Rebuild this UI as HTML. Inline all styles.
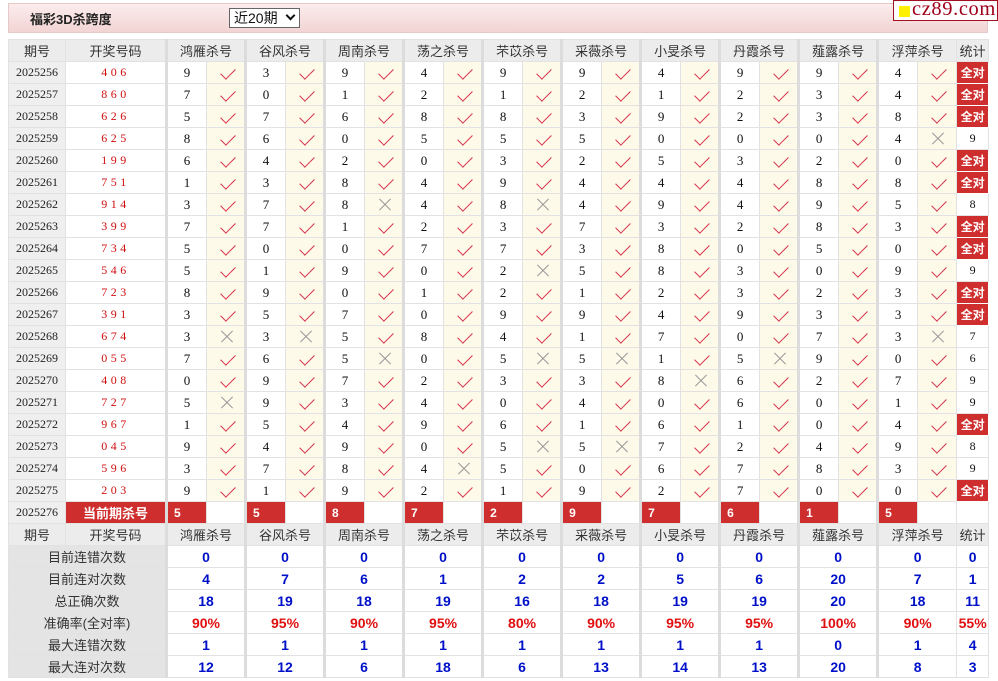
<!DOCTYPE html>
<html><head><meta charset="utf-8">
<style>
*{margin:0;padding:0;box-sizing:border-box}
body{width:998px;height:681px;background:#fff;position:relative;overflow:hidden;font-family:"Liberation Sans","Noto Sans CJK SC",sans-serif;}
#bar{position:absolute;left:8px;top:3px;width:980px;height:30px;background:linear-gradient(#fcecec,#f2d4d4);border:1px solid #e5c8c8;}
#bar b{position:absolute;left:21px;top:5px;font-size:13px;color:#222;font-family:"Liberation Sans","Noto Sans CJK SC",sans-serif}
#sel{position:absolute;left:220px;top:4px;width:71px;height:20px;border:1px solid #666;background:#fff;font-size:14px;line-height:18px;padding-left:4px;color:#111}
#sel span{position:absolute;right:5px;top:3px;width:7px;height:7px;border-right:2px solid #111;border-bottom:2px solid #111;transform:rotate(45deg)}
#logo{position:absolute;left:893px;top:0;width:105px;height:21px;background:#fff;border:1px solid #a01020;}
#logo i{position:absolute;left:5px;top:5px;width:11px;height:11px;background:#ffef00}
#logo span{position:absolute;left:18px;top:-3px;font-family:"Liberation Serif",serif;font-size:20.5px;color:#a00018;letter-spacing:.6px}
table{position:absolute;left:8px;top:39px;width:980px;border-collapse:collapse;table-layout:fixed}
td{height:22px;border:1px solid #e2e2e2;text-align:center;font-size:12px;padding:0;overflow:hidden;white-space:nowrap}
tr.h td{background:#ececec;color:#333;font-size:13px}
td.p{background:#efefef;font-family:"Liberation Serif",serif;color:#222;font-size:12px}
td.k{color:#d01010;font-family:"Liberation Serif",serif;letter-spacing:3.5px;font-size:12px}
td.n{border-left:3px solid #dcdcdc;font-family:"Liberation Serif",serif;font-size:13px;color:#111}
td.y,td.x{background:#fdfaea;position:relative}
td.y::after{content:"";position:absolute;left:17px;top:3px;width:7px;height:13px;border-right:1.8px solid #d8314a;border-bottom:1.8px solid #d8314a;transform:rotate(45deg)}
td.x::before,td.x::after{content:"";position:absolute;left:12px;top:10px;width:16px;height:1px;background:#999;transform:rotate(45deg)}
td.x::after{transform:rotate(-45deg)}
td.q{background:#cf2e2e;color:#fff;font-weight:bold;font-size:12px;border:1px solid #fff}
td.s{font-family:"Liberation Serif",serif;font-size:12px;color:#111}
td.c{background:#cf2e2e;color:#fff;font-weight:bold;font-size:13px}
td.r{background:#cf2e2e;color:#fff;font-weight:bold;font-size:12px;text-align:left;padding-left:6px;border-left:3px solid #dcdcdc}
td.w{background:#fff}
tr.h td.g{border-left:3px solid #dcdcdc}
td.l{background:#e4e4e4;color:#333;font-size:13px}
td.v{color:#0010c8;font-weight:bold;font-size:14px;border-left:3px solid #dcdcdc}
td.v.e{color:#e01010}
td.t{color:#0010c8;font-weight:bold;font-size:14px}
td.t.e{color:#e01010}
</style></head><body>
<div id="bar"><b>福彩3D杀跨度</b><div id="sel">近20期<span></span></div></div>
<div id="logo"><i></i><span>cz89.com</span></div>
<table>
<colgroup><col style="width:57px"><col style="width:101px">
<col style="width:40px"><col style="width:39px"><col style="width:40px"><col style="width:39px"><col style="width:40px"><col style="width:39px"><col style="width:40px"><col style="width:39px"><col style="width:40px"><col style="width:39px"><col style="width:40px"><col style="width:39px"><col style="width:40px"><col style="width:39px"><col style="width:40px"><col style="width:39px"><col style="width:40px"><col style="width:39px"><col style="width:40px"><col style="width:39px"><col style="width:32px"></colgroup>
<tr class="h"><td>期号</td><td>开奖号码</td><td colspan="2" class="g">鸿雁杀号</td><td colspan="2" class="g">谷风杀号</td><td colspan="2" class="g">周南杀号</td><td colspan="2" class="g">荡之杀号</td><td colspan="2" class="g">芣苡杀号</td><td colspan="2" class="g">采薇杀号</td><td colspan="2" class="g">小旻杀号</td><td colspan="2" class="g">丹霞杀号</td><td colspan="2" class="g">薤露杀号</td><td colspan="2" class="g">浮萍杀号</td><td>统计</td></tr>
<tr><td class="p">2025256</td><td class="k">406</td><td class="n">9</td><td class="y"></td><td class="n">3</td><td class="y"></td><td class="n">9</td><td class="y"></td><td class="n">4</td><td class="y"></td><td class="n">9</td><td class="y"></td><td class="n">9</td><td class="y"></td><td class="n">4</td><td class="y"></td><td class="n">9</td><td class="y"></td><td class="n">9</td><td class="y"></td><td class="n">4</td><td class="y"></td><td class="q">全对</td></tr>
<tr><td class="p">2025257</td><td class="k">860</td><td class="n">7</td><td class="y"></td><td class="n">0</td><td class="y"></td><td class="n">1</td><td class="y"></td><td class="n">2</td><td class="y"></td><td class="n">1</td><td class="y"></td><td class="n">2</td><td class="y"></td><td class="n">1</td><td class="y"></td><td class="n">2</td><td class="y"></td><td class="n">3</td><td class="y"></td><td class="n">4</td><td class="y"></td><td class="q">全对</td></tr>
<tr><td class="p">2025258</td><td class="k">626</td><td class="n">5</td><td class="y"></td><td class="n">7</td><td class="y"></td><td class="n">6</td><td class="y"></td><td class="n">8</td><td class="y"></td><td class="n">8</td><td class="y"></td><td class="n">3</td><td class="y"></td><td class="n">9</td><td class="y"></td><td class="n">2</td><td class="y"></td><td class="n">3</td><td class="y"></td><td class="n">8</td><td class="y"></td><td class="q">全对</td></tr>
<tr><td class="p">2025259</td><td class="k">625</td><td class="n">8</td><td class="y"></td><td class="n">6</td><td class="y"></td><td class="n">0</td><td class="y"></td><td class="n">5</td><td class="y"></td><td class="n">5</td><td class="y"></td><td class="n">5</td><td class="y"></td><td class="n">0</td><td class="y"></td><td class="n">0</td><td class="y"></td><td class="n">0</td><td class="y"></td><td class="n">4</td><td class="x"></td><td class="s">9</td></tr>
<tr><td class="p">2025260</td><td class="k">199</td><td class="n">6</td><td class="y"></td><td class="n">4</td><td class="y"></td><td class="n">2</td><td class="y"></td><td class="n">0</td><td class="y"></td><td class="n">3</td><td class="y"></td><td class="n">2</td><td class="y"></td><td class="n">5</td><td class="y"></td><td class="n">3</td><td class="y"></td><td class="n">2</td><td class="y"></td><td class="n">0</td><td class="y"></td><td class="q">全对</td></tr>
<tr><td class="p">2025261</td><td class="k">751</td><td class="n">1</td><td class="y"></td><td class="n">3</td><td class="y"></td><td class="n">8</td><td class="y"></td><td class="n">4</td><td class="y"></td><td class="n">9</td><td class="y"></td><td class="n">4</td><td class="y"></td><td class="n">4</td><td class="y"></td><td class="n">4</td><td class="y"></td><td class="n">8</td><td class="y"></td><td class="n">8</td><td class="y"></td><td class="q">全对</td></tr>
<tr><td class="p">2025262</td><td class="k">914</td><td class="n">3</td><td class="y"></td><td class="n">7</td><td class="y"></td><td class="n">8</td><td class="x"></td><td class="n">4</td><td class="y"></td><td class="n">8</td><td class="x"></td><td class="n">4</td><td class="y"></td><td class="n">9</td><td class="y"></td><td class="n">4</td><td class="y"></td><td class="n">9</td><td class="y"></td><td class="n">5</td><td class="y"></td><td class="s">8</td></tr>
<tr><td class="p">2025263</td><td class="k">399</td><td class="n">7</td><td class="y"></td><td class="n">7</td><td class="y"></td><td class="n">1</td><td class="y"></td><td class="n">2</td><td class="y"></td><td class="n">3</td><td class="y"></td><td class="n">7</td><td class="y"></td><td class="n">3</td><td class="y"></td><td class="n">2</td><td class="y"></td><td class="n">8</td><td class="y"></td><td class="n">3</td><td class="y"></td><td class="q">全对</td></tr>
<tr><td class="p">2025264</td><td class="k">734</td><td class="n">5</td><td class="y"></td><td class="n">0</td><td class="y"></td><td class="n">0</td><td class="y"></td><td class="n">7</td><td class="y"></td><td class="n">7</td><td class="y"></td><td class="n">3</td><td class="y"></td><td class="n">8</td><td class="y"></td><td class="n">0</td><td class="y"></td><td class="n">5</td><td class="y"></td><td class="n">0</td><td class="y"></td><td class="q">全对</td></tr>
<tr><td class="p">2025265</td><td class="k">546</td><td class="n">5</td><td class="y"></td><td class="n">1</td><td class="y"></td><td class="n">9</td><td class="y"></td><td class="n">0</td><td class="y"></td><td class="n">2</td><td class="x"></td><td class="n">5</td><td class="y"></td><td class="n">8</td><td class="y"></td><td class="n">3</td><td class="y"></td><td class="n">0</td><td class="y"></td><td class="n">9</td><td class="y"></td><td class="s">9</td></tr>
<tr><td class="p">2025266</td><td class="k">723</td><td class="n">8</td><td class="y"></td><td class="n">9</td><td class="y"></td><td class="n">0</td><td class="y"></td><td class="n">1</td><td class="y"></td><td class="n">2</td><td class="y"></td><td class="n">1</td><td class="y"></td><td class="n">2</td><td class="y"></td><td class="n">3</td><td class="y"></td><td class="n">2</td><td class="y"></td><td class="n">3</td><td class="y"></td><td class="q">全对</td></tr>
<tr><td class="p">2025267</td><td class="k">391</td><td class="n">3</td><td class="y"></td><td class="n">5</td><td class="y"></td><td class="n">7</td><td class="y"></td><td class="n">0</td><td class="y"></td><td class="n">9</td><td class="y"></td><td class="n">9</td><td class="y"></td><td class="n">4</td><td class="y"></td><td class="n">9</td><td class="y"></td><td class="n">3</td><td class="y"></td><td class="n">3</td><td class="y"></td><td class="q">全对</td></tr>
<tr><td class="p">2025268</td><td class="k">674</td><td class="n">3</td><td class="x"></td><td class="n">3</td><td class="x"></td><td class="n">5</td><td class="y"></td><td class="n">8</td><td class="y"></td><td class="n">4</td><td class="y"></td><td class="n">1</td><td class="y"></td><td class="n">7</td><td class="y"></td><td class="n">0</td><td class="y"></td><td class="n">7</td><td class="y"></td><td class="n">3</td><td class="x"></td><td class="s">7</td></tr>
<tr><td class="p">2025269</td><td class="k">055</td><td class="n">7</td><td class="y"></td><td class="n">6</td><td class="y"></td><td class="n">5</td><td class="x"></td><td class="n">0</td><td class="y"></td><td class="n">5</td><td class="x"></td><td class="n">5</td><td class="x"></td><td class="n">1</td><td class="y"></td><td class="n">5</td><td class="x"></td><td class="n">9</td><td class="y"></td><td class="n">0</td><td class="y"></td><td class="s">6</td></tr>
<tr><td class="p">2025270</td><td class="k">408</td><td class="n">0</td><td class="y"></td><td class="n">9</td><td class="y"></td><td class="n">7</td><td class="y"></td><td class="n">2</td><td class="y"></td><td class="n">3</td><td class="y"></td><td class="n">3</td><td class="y"></td><td class="n">8</td><td class="x"></td><td class="n">6</td><td class="y"></td><td class="n">2</td><td class="y"></td><td class="n">7</td><td class="y"></td><td class="s">9</td></tr>
<tr><td class="p">2025271</td><td class="k">727</td><td class="n">5</td><td class="x"></td><td class="n">9</td><td class="y"></td><td class="n">3</td><td class="y"></td><td class="n">4</td><td class="y"></td><td class="n">0</td><td class="y"></td><td class="n">4</td><td class="y"></td><td class="n">0</td><td class="y"></td><td class="n">6</td><td class="y"></td><td class="n">0</td><td class="y"></td><td class="n">1</td><td class="y"></td><td class="s">9</td></tr>
<tr><td class="p">2025272</td><td class="k">967</td><td class="n">1</td><td class="y"></td><td class="n">5</td><td class="y"></td><td class="n">4</td><td class="y"></td><td class="n">9</td><td class="y"></td><td class="n">6</td><td class="y"></td><td class="n">1</td><td class="y"></td><td class="n">6</td><td class="y"></td><td class="n">1</td><td class="y"></td><td class="n">0</td><td class="y"></td><td class="n">4</td><td class="y"></td><td class="q">全对</td></tr>
<tr><td class="p">2025273</td><td class="k">045</td><td class="n">9</td><td class="y"></td><td class="n">4</td><td class="y"></td><td class="n">9</td><td class="y"></td><td class="n">0</td><td class="y"></td><td class="n">5</td><td class="x"></td><td class="n">5</td><td class="x"></td><td class="n">7</td><td class="y"></td><td class="n">2</td><td class="y"></td><td class="n">4</td><td class="y"></td><td class="n">9</td><td class="y"></td><td class="s">8</td></tr>
<tr><td class="p">2025274</td><td class="k">596</td><td class="n">3</td><td class="y"></td><td class="n">7</td><td class="y"></td><td class="n">8</td><td class="y"></td><td class="n">4</td><td class="x"></td><td class="n">5</td><td class="y"></td><td class="n">0</td><td class="y"></td><td class="n">6</td><td class="y"></td><td class="n">7</td><td class="y"></td><td class="n">8</td><td class="y"></td><td class="n">3</td><td class="y"></td><td class="s">9</td></tr>
<tr><td class="p">2025275</td><td class="k">203</td><td class="n">9</td><td class="y"></td><td class="n">1</td><td class="y"></td><td class="n">9</td><td class="y"></td><td class="n">2</td><td class="y"></td><td class="n">1</td><td class="y"></td><td class="n">9</td><td class="y"></td><td class="n">2</td><td class="y"></td><td class="n">7</td><td class="y"></td><td class="n">0</td><td class="y"></td><td class="n">0</td><td class="y"></td><td class="q">全对</td></tr>
<tr><td class="p">2025276</td><td class="c">当前期杀号</td><td class="r">5</td><td class="w"></td><td class="r">5</td><td class="w"></td><td class="r">8</td><td class="w"></td><td class="r">7</td><td class="w"></td><td class="r">2</td><td class="w"></td><td class="r">9</td><td class="w"></td><td class="r">7</td><td class="w"></td><td class="r">6</td><td class="w"></td><td class="r">1</td><td class="w"></td><td class="r">5</td><td class="w"></td><td class="w"></td></tr>
<tr class="h"><td>期号</td><td>开奖号码</td><td colspan="2" class="g">鸿雁杀号</td><td colspan="2" class="g">谷风杀号</td><td colspan="2" class="g">周南杀号</td><td colspan="2" class="g">荡之杀号</td><td colspan="2" class="g">芣苡杀号</td><td colspan="2" class="g">采薇杀号</td><td colspan="2" class="g">小旻杀号</td><td colspan="2" class="g">丹霞杀号</td><td colspan="2" class="g">薤露杀号</td><td colspan="2" class="g">浮萍杀号</td><td>统计</td></tr>
<tr><td colspan="2" class="l">目前连错次数</td><td colspan="2" class="v">0</td><td colspan="2" class="v">0</td><td colspan="2" class="v">0</td><td colspan="2" class="v">0</td><td colspan="2" class="v">0</td><td colspan="2" class="v">0</td><td colspan="2" class="v">0</td><td colspan="2" class="v">0</td><td colspan="2" class="v">0</td><td colspan="2" class="v">0</td><td class="t">0</td></tr>
<tr><td colspan="2" class="l">目前连对次数</td><td colspan="2" class="v">4</td><td colspan="2" class="v">7</td><td colspan="2" class="v">6</td><td colspan="2" class="v">1</td><td colspan="2" class="v">2</td><td colspan="2" class="v">2</td><td colspan="2" class="v">5</td><td colspan="2" class="v">6</td><td colspan="2" class="v">20</td><td colspan="2" class="v">7</td><td class="t">1</td></tr>
<tr><td colspan="2" class="l">总正确次数</td><td colspan="2" class="v">18</td><td colspan="2" class="v">19</td><td colspan="2" class="v">18</td><td colspan="2" class="v">19</td><td colspan="2" class="v">16</td><td colspan="2" class="v">18</td><td colspan="2" class="v">19</td><td colspan="2" class="v">19</td><td colspan="2" class="v">20</td><td colspan="2" class="v">18</td><td class="t">11</td></tr>
<tr><td colspan="2" class="l">准确率(全对率)</td><td colspan="2" class="v e">90%</td><td colspan="2" class="v e">95%</td><td colspan="2" class="v e">90%</td><td colspan="2" class="v e">95%</td><td colspan="2" class="v e">80%</td><td colspan="2" class="v e">90%</td><td colspan="2" class="v e">95%</td><td colspan="2" class="v e">95%</td><td colspan="2" class="v e">100%</td><td colspan="2" class="v e">90%</td><td class="t e">55%</td></tr>
<tr><td colspan="2" class="l">最大连错次数</td><td colspan="2" class="v">1</td><td colspan="2" class="v">1</td><td colspan="2" class="v">1</td><td colspan="2" class="v">1</td><td colspan="2" class="v">1</td><td colspan="2" class="v">1</td><td colspan="2" class="v">1</td><td colspan="2" class="v">1</td><td colspan="2" class="v">0</td><td colspan="2" class="v">1</td><td class="t">4</td></tr>
<tr><td colspan="2" class="l">最大连对次数</td><td colspan="2" class="v">12</td><td colspan="2" class="v">12</td><td colspan="2" class="v">6</td><td colspan="2" class="v">18</td><td colspan="2" class="v">6</td><td colspan="2" class="v">13</td><td colspan="2" class="v">14</td><td colspan="2" class="v">13</td><td colspan="2" class="v">20</td><td colspan="2" class="v">8</td><td class="t">3</td></tr>
</table>
</body></html>
